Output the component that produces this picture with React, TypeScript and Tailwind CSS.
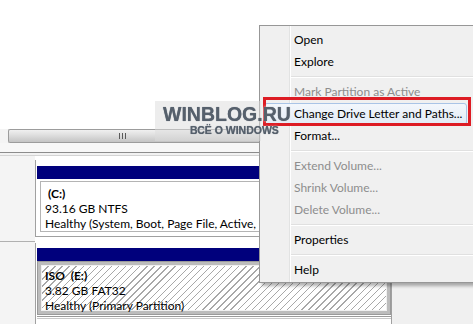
import React from "react";

type Item = { t: string; d?: boolean; hl?: boolean } | "sep";

const items: Item[] = [
  { t: "Open" },
  { t: "Explore" },
  "sep",
  { t: "Mark Partition as Active", d: true },
  { t: "Change Drive Letter and Paths...", hl: true },
  { t: "Format..." },
  "sep",
  { t: "Extend Volume...", d: true },
  { t: "Shrink Volume...", d: true },
  { t: "Delete Volume...", d: true },
  "sep",
  { t: "Properties" },
  "sep",
  { t: "Help" },
];

function Menu() {
  return (
    <div className="absolute left-[259px] top-[25px] w-[222px] h-[258px] border border-[#979797] bg-[#f0f0f0] shadow-[3px_3px_3px_rgba(0,0,0,0.3)] pt-[3px]">
      <div className="absolute left-[29px] top-0 bottom-0 w-px bg-[#e2e3e3]" />
      <div className="absolute left-[30px] top-0 bottom-0 w-px bg-white" />
      {items.map((it, i) =>
        it === "sep" ? (
          <div key={i} className="h-[8px] flex flex-col justify-center pl-[31px]">
            <div className="h-px bg-[#e0e0e0]" />
            <div className="h-px bg-white" />
          </div>
        ) : (
          <div key={i} className="relative h-[22px] flex items-center pl-[34px]">
            {it.hl && (
              <div className="absolute left-[4px] top-[0px] w-[203px] h-[22px] rounded-[3px] border border-[#a9c4e6] bg-[linear-gradient(#f3f7fc,#e2ebf6)]" />
            )}
            <span
              className={
                "relative text-[12px] leading-none whitespace-nowrap " +
                (it.d ? "text-[#8d8d8d]" : "text-black")
              }
            >
              {it.t}
            </span>
          </div>
        )
      )}
    </div>
  );
}

export default function App() {
  return (
    <div className="relative w-[473px] h-[324px] overflow-hidden bg-white font-['Lato','Segoe_UI',sans-serif]">
      <div className="h-[129px] bg-white" />
      {/* scrollbar */}
      <div className="flex h-[14px]">
        <div className="w-[8px] bg-[#f4f4f4]" />
        <div className="flex-1 flex items-center rounded-l-[2px] border-y border-l border-[#9c9c9c] bg-[linear-gradient(#f0f0f0,#e0e0e0_40%,#c4c4c4)] pl-[110px]">
          <div className="flex gap-[2px]">
            <div className="w-px h-[6px] bg-[#5a5a5a]" />
            <div className="w-px h-[6px] bg-[#5a5a5a]" />
            <div className="w-px h-[6px] bg-[#5a5a5a]" />
          </div>
        </div>
      </div>
      <div className="h-[9px] bg-[#f7f7f7]" />
      <div className="h-px bg-[#8c8c8c]" />
      <div className="h-[2px] bg-[#f2f2f2]" />
      <div className="h-px bg-[#d4d4d4]" />
      {/* Disk 0 row */}
      <div className="flex h-[81px]">
        <div className="w-[35px] bg-[#f4f4f4]" />
        <div className="flex-1 flex flex-col bg-white">
          <div className="h-[4px]" />
          <div className="flex-1 border-l border-b border-[#a0a0a0] pl-[1px] pt-[6px] flex">
            <div className="w-[354px] flex flex-col">
              <div className="h-[13px] bg-[#00007c]" />
              <div className="h-[2px]" />
              <div className="ml-[3px] h-[51px] border border-[#b4b4b4] bg-white pl-[4px] pt-[4px] text-[12px] leading-[15px] text-black whitespace-nowrap">
                <div className="font-bold">&nbsp;(C:)</div>
                <div>93.16 GB NTFS</div>
                <div>Healthy (System, Boot, Page File, Active, Crash Dump, Primary Partition)</div>
              </div>
            </div>
            <div className="flex-1 flex flex-col">
              <div className="h-[13px] bg-[#00007c]" />
            </div>
          </div>
        </div>
      </div>
      {/* Disk 1 row */}
      <div className="flex h-[87px]">
        <div className="w-[35px] flex flex-col">
          <div className="h-[4px] bg-[#f4f4f4]" />
          <div className="flex-1 border-t border-[#b0b0b0] bg-[#f4f4f4]" />
        </div>
        <div className="flex-1 flex flex-col bg-white">
          <div className="h-[6px]" />
          <div className="flex-1 border-l border-[#a0a0a0] pl-[1px] pt-[5px] flex">
            <div className="w-[354px] flex flex-col">
              <div className="h-[13px] bg-[#00007c]" />
              <div className="h-[54px] border border-[#9a9a9a] p-[3px] bg-[#bcbcbc]">
                <div className="h-full border border-[#f0f0f0] bg-[repeating-linear-gradient(135deg,#ffffff_0px,#ffffff_4px,#a8a8a8_4px,#a8a8a8_5px)] pl-[3px] pt-[2px] text-[12px] leading-[15px] text-black whitespace-nowrap">
                  <div className="font-bold">ISO&nbsp; (E:)</div>
                  <div>3.82 GB FAT32</div>
                  <div>Healthy (Primary Partition)</div>
                </div>
              </div>
              <div className="h-px bg-white" />
              <div className="h-px bg-[#9a9a9a]" />
              <div className="h-px bg-white" />
              <div className="h-px bg-[#c8c8c8]" />
            </div>
            <div className="flex-1 flex flex-col border-l border-[#a0a0a0] bg-[#f0f0f0]">
              <div className="h-[13px] bg-[#00007c]" />
            </div>
          </div>
        </div>
      </div>

      <Menu />

      {/* red highlight frame */}
      <div className="absolute left-[263px] top-[97px] w-[208px] h-[29px] border-[3px] border-[#dd1c24]" />

      {/* watermark */}
      <div className="absolute left-[155px] top-[101px] w-[106px] h-[40px] bg-[#dcdcdc]/50" />
      <div className="absolute left-[163px] top-[103px] text-[19.5px] leading-[22px] font-bold text-[#56606c] [font-family:'Liberation_Sans',sans-serif] blur-[0.6px] whitespace-nowrap [text-shadow:0_0_1px_#56606c,0_0_3px_#ffffff]">
        WINBLOG.RU
      </div>
      <div className="absolute left-[190px] top-[124px] text-[10.5px] leading-[12px] font-bold text-[#56606c] [font-family:'Liberation_Sans',sans-serif] blur-[0.5px] whitespace-nowrap [text-shadow:0_0_1px_#56606c,0_0_2px_#ffffff]">
        ВСЁ О WINDOWS
      </div>
    </div>
  );
}
